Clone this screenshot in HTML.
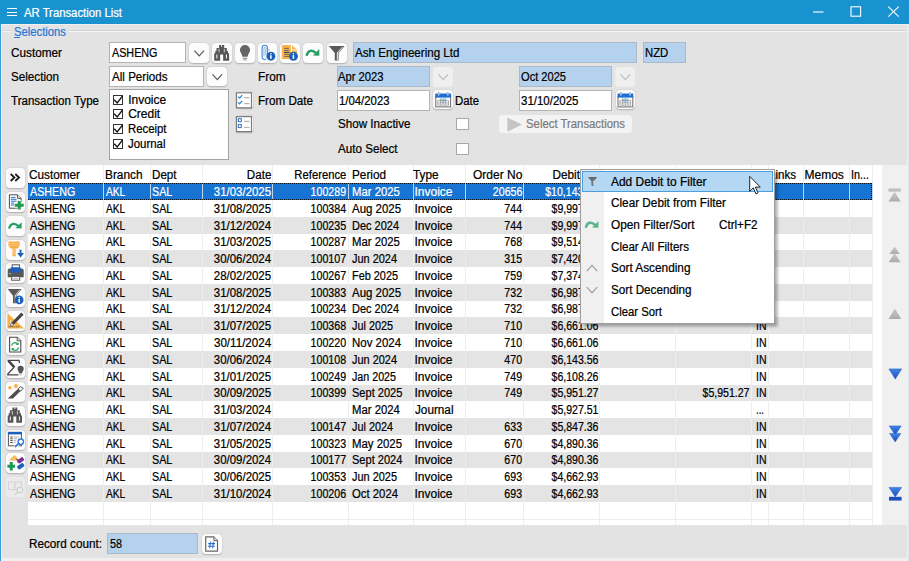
<!DOCTYPE html>
<html><head><meta charset="utf-8"><title>AR Transaction List</title>
<style>
html,body{margin:0;padding:0}
body{width:909px;height:561px;overflow:hidden;position:relative;background:#f0f0f0;font-family:"Liberation Sans",sans-serif;font-size:12px;color:#000}
div,span.t,svg{position:absolute;box-sizing:border-box}
span.t{white-space:pre;display:block;-webkit-text-stroke:0.22px currentColor}
.btn{background:#fcfcfc;border-radius:4px;box-shadow:0 0.6px 1.6px rgba(0,0,0,.24)}
.inp{background:#fff;border:1px solid #b4b4b4}
.ro{background:#b4d2ee;border:1px solid #a9b9c9}
.cb{background:#fff;border:1px solid #a8a8a8}
</style></head><body>
<div style="left:0.00px;top:0.00px;width:909.00px;height:24.00px;background:#1993cf"></div>
<div style="left:0.00px;top:24.00px;width:1.00px;height:537.00px;background:#3a9fd8"></div>
<div style="left:908.00px;top:24.00px;width:1.00px;height:537.00px;background:#dbe6ee"></div>
<div style="left:2.00px;top:25.00px;width:905.00px;height:533.00px;background:#e3e3e3"></div>
<div style="left:6.50px;top:8.20px;width:10.00px;height:1.30px;background:#fff"></div>
<div style="left:6.50px;top:11.50px;width:10.00px;height:1.30px;background:#fff"></div>
<div style="left:6.50px;top:15.00px;width:10.00px;height:1.30px;background:#fff"></div>
<span class="t" style="top:4.70px;line-height:16px;font-size:12px;color:#fff;left:23.50px;transform-origin:0 50%;transform:scaleX(0.9419);">AR Transaction List</span>
<svg style="left:808px;top:2px" width="100" height="20" viewBox="808 2 100 20"><g fill="none" stroke="#fff" stroke-width="1.1"><path d="M813 12h10.5"/><rect x="851" y="6.8" width="9.6" height="9.4"/><path d="M888.3 6.6l10.4 10M898.7 6.6l-10.4 10"/></g></svg>
<div style="left:3.00px;top:30.00px;width:904.00px;height:1.00px;background:#d2d2d2"></div>
<div style="left:3.00px;top:31.00px;width:904.00px;height:1.00px;background:#f6f6f6"></div>
<div style="left:10.60px;top:26.00px;width:58.20px;height:12.00px;background:#e3e3e3"></div>
<span class="t" style="top:24.30px;line-height:16px;font-size:12px;color:#2677d6;left:13.50px;transform-origin:0 50%;transform:scaleX(0.9392);">Selections</span>
<div style="left:14.20px;top:37.20px;width:5.60px;height:1.00px;background:#2677d6"></div>
<span class="t" style="top:44.70px;line-height:16px;font-size:12px;left:11.00px;transform-origin:0 50%;transform:scaleX(0.9805);">Customer</span>
<span class="t" style="top:68.70px;line-height:16px;font-size:12px;left:11.00px;transform-origin:0 50%;transform:scaleX(0.9724);">Selection</span>
<span class="t" style="top:92.50px;line-height:16px;font-size:12px;left:11.00px;transform-origin:0 50%;transform:scaleX(0.9630);">Transaction Type</span>
<span class="t" style="top:69.00px;line-height:16px;font-size:12px;left:258.00px;transform-origin:0 50%;transform:scaleX(0.9823);">From</span>
<span class="t" style="top:92.50px;line-height:16px;font-size:12px;left:258.00px;transform-origin:0 50%;transform:scaleX(0.9704);">From Date</span>
<span class="t" style="top:92.50px;line-height:16px;font-size:12px;left:454.80px;transform-origin:0 50%;transform:scaleX(0.9469);">Date</span>
<span class="t" style="top:116.00px;line-height:16px;font-size:12px;left:338.00px;transform-origin:0 50%;transform:scaleX(0.9705);">Show Inactive</span>
<span class="t" style="top:140.70px;line-height:16px;font-size:12px;left:338.00px;transform-origin:0 50%;transform:scaleX(0.9695);">Auto Select</span>
<div class="inp" style="left:109.00px;top:42.00px;width:77.30px;height:21.30px;"></div>
<span class="t" style="top:44.70px;line-height:16px;font-size:12px;left:112.00px;transform-origin:0 50%;transform:scaleX(0.8978);">ASHENG</span>
<div class="btn" style="left:189.20px;top:42.50px;width:20.00px;height:20.60px;"></div>
<div class="inp" style="left:109.00px;top:65.80px;width:94.90px;height:21.30px;"></div>
<span class="t" style="top:68.70px;line-height:16px;font-size:12px;left:112.00px;transform-origin:0 50%;transform:scaleX(0.9676);">All Periods</span>
<div class="btn" style="left:207.40px;top:66.90px;width:19.60px;height:19.60px;"></div>
<div class="inp" style="left:109.30px;top:89.40px;width:119.60px;height:70.40px;border:1.3px solid #a4a4a4"></div>
<div class="btn" style="left:211.80px;top:42.50px;width:19.80px;height:20.60px;"></div>
<div class="btn" style="left:235.00px;top:42.50px;width:19.80px;height:20.60px;"></div>
<div class="btn" style="left:257.50px;top:42.50px;width:19.80px;height:20.60px;"></div>
<div class="btn" style="left:280.10px;top:42.50px;width:19.80px;height:20.60px;"></div>
<div class="btn" style="left:303.20px;top:42.50px;width:19.80px;height:20.60px;"></div>
<div class="btn" style="left:326.80px;top:42.50px;width:19.80px;height:20.60px;"></div>
<div class="ro" style="left:353.00px;top:42.20px;width:284.00px;height:21.00px;"></div>
<span class="t" style="top:44.70px;line-height:16px;font-size:12px;left:354.50px;transform-origin:0 50%;transform:scaleX(0.9669);">Ash Engineering Ltd</span>
<div class="ro" style="left:643.00px;top:42.20px;width:43.00px;height:21.00px;"></div>
<span class="t" style="top:44.70px;line-height:16px;font-size:12px;left:644.80px;transform-origin:0 50%;transform:scaleX(0.9448);">NZD</span>
<div class="ro" style="left:337.00px;top:66.00px;width:93.00px;height:21.00px;"></div>
<span class="t" style="top:68.70px;line-height:16px;font-size:12px;left:338.20px;transform-origin:0 50%;transform:scaleX(0.9342);">Apr 2023</span>
<div class="btn" style="left:433.20px;top:67.00px;width:19.80px;height:19.50px;background:#efefef;box-shadow:none"></div>
<div class="ro" style="left:518.50px;top:66.00px;width:93.50px;height:21.00px;"></div>
<span class="t" style="top:68.70px;line-height:16px;font-size:12px;left:521.00px;transform-origin:0 50%;transform:scaleX(0.9241);">Oct 2025</span>
<div class="btn" style="left:615.40px;top:67.00px;width:19.80px;height:19.50px;background:#efefef;box-shadow:none"></div>
<div class="inp" style="left:337.00px;top:89.70px;width:93.00px;height:21.00px;"></div>
<span class="t" style="top:92.50px;line-height:16px;font-size:12px;left:338.90px;transform-origin:0 50%;transform:scaleX(0.9460);">1/04/2023</span>
<div class="btn" style="left:433.40px;top:89.90px;width:19.50px;height:19.40px;"></div>
<div class="inp" style="left:518.50px;top:89.70px;width:93.50px;height:21.00px;"></div>
<span class="t" style="top:92.50px;line-height:16px;font-size:12px;left:520.50px;transform-origin:0 50%;transform:scaleX(0.9574);">31/10/2025</span>
<div class="btn" style="left:615.60px;top:89.90px;width:19.50px;height:19.40px;"></div>
<div class="btn" style="left:236.30px;top:92.00px;width:16.30px;height:16.30px;border-radius:2px"></div>
<div class="btn" style="left:236.30px;top:115.70px;width:16.30px;height:16.80px;border-radius:2px"></div>
<div class="cb" style="left:456.30px;top:117.50px;width:12.50px;height:12.50px;"></div>
<div class="cb" style="left:456.30px;top:142.50px;width:12.50px;height:12.50px;"></div>
<div style="left:499.20px;top:115.00px;width:132.60px;height:18.00px;background:#f3f3f3;border-radius:3.5px"></div>
<svg style="left:507px;top:116.5px" width="16" height="16" viewBox="0 0 16 16"><path d="M0.4 0.6L15 7.6L0.4 14.7z" fill="#c4c4c4"/></svg>
<span class="t" style="top:116.00px;line-height:16px;font-size:12px;color:#7b7b7b;left:525.70px;transform-origin:0 50%;transform:scaleX(0.9454);">Select Transactions</span>
<div style="left:113.30px;top:94.50px;width:10.00px;height:10.00px;background:#fff;border:1px solid #333"></div>
<svg style="left:113.3px;top:94.50px" width="10" height="10" viewBox="0 0 10 10" overflow="visible"><path d="M1.2 4.8L4.2 8L9.6 0.8" fill="none" stroke="#111" stroke-width="1.35"/></svg>
<span class="t" style="top:91.50px;line-height:16px;font-size:12px;left:128.20px;transform-origin:0 50%;">Invoice</span>
<div style="left:113.30px;top:109.25px;width:10.00px;height:10.00px;background:#fff;border:1px solid #333"></div>
<svg style="left:113.3px;top:109.25px" width="10" height="10" viewBox="0 0 10 10" overflow="visible"><path d="M1.2 4.8L4.2 8L9.6 0.8" fill="none" stroke="#111" stroke-width="1.35"/></svg>
<span class="t" style="top:106.25px;line-height:16px;font-size:12px;left:128.20px;transform-origin:0 50%;">Credit</span>
<div style="left:113.30px;top:124.00px;width:10.00px;height:10.00px;background:#fff;border:1px solid #333"></div>
<svg style="left:113.3px;top:124.00px" width="10" height="10" viewBox="0 0 10 10" overflow="visible"><path d="M1.2 4.8L4.2 8L9.6 0.8" fill="none" stroke="#111" stroke-width="1.35"/></svg>
<span class="t" style="top:121.00px;line-height:16px;font-size:12px;left:128.20px;transform-origin:0 50%;transform:scaleX(0.9463);">Receipt</span>
<div style="left:113.30px;top:138.75px;width:10.00px;height:10.00px;background:#fff;border:1px solid #333"></div>
<svg style="left:113.3px;top:138.75px" width="10" height="10" viewBox="0 0 10 10" overflow="visible"><path d="M1.2 4.8L4.2 8L9.6 0.8" fill="none" stroke="#111" stroke-width="1.35"/></svg>
<span class="t" style="top:135.75px;line-height:16px;font-size:12px;left:128.20px;transform-origin:0 50%;transform:scaleX(0.9528);">Journal</span>
<div style="left:28.00px;top:165.40px;width:854.00px;height:359.80px;background:#fff"></div>
<div style="left:882.00px;top:165.40px;width:25.00px;height:359.80px;background:#f0f0f0"></div>
<div style="left:28.00px;top:183.00px;width:844.00px;height:17.00px;background:#1874d2"></div>
<div style="left:28.00px;top:217.00px;width:844.00px;height:17.00px;background:#e4e4e4"></div>
<div style="left:28.00px;top:250.00px;width:844.00px;height:17.00px;background:#e4e4e4"></div>
<div style="left:28.00px;top:284.00px;width:844.00px;height:17.00px;background:#e4e4e4"></div>
<div style="left:28.00px;top:317.00px;width:844.00px;height:17.00px;background:#e4e4e4"></div>
<div style="left:28.00px;top:351.00px;width:844.00px;height:17.00px;background:#e4e4e4"></div>
<div style="left:28.00px;top:385.00px;width:844.00px;height:16.00px;background:#e4e4e4"></div>
<div style="left:28.00px;top:418.00px;width:844.00px;height:17.00px;background:#e4e4e4"></div>
<div style="left:28.00px;top:452.00px;width:844.00px;height:16.00px;background:#e4e4e4"></div>
<div style="left:28.00px;top:485.00px;width:844.00px;height:17.00px;background:#e4e4e4"></div>
<div style="left:28.00px;top:519.00px;width:844.00px;height:1.00px;background:#ececec"></div>
<div style="left:103.00px;top:165.40px;width:1.00px;height:359.80px;background:#eeeeee"></div>
<div style="left:103.00px;top:183.00px;width:1.00px;height:17.00px;background:#bcd6f2"></div>
<div style="left:149.50px;top:165.40px;width:1.00px;height:359.80px;background:#eeeeee"></div>
<div style="left:149.50px;top:183.00px;width:1.00px;height:17.00px;background:#bcd6f2"></div>
<div style="left:202.00px;top:165.40px;width:1.00px;height:359.80px;background:#eeeeee"></div>
<div style="left:202.00px;top:183.00px;width:1.00px;height:17.00px;background:#bcd6f2"></div>
<div style="left:272.00px;top:165.40px;width:1.00px;height:359.80px;background:#eeeeee"></div>
<div style="left:272.00px;top:183.00px;width:1.00px;height:17.00px;background:#bcd6f2"></div>
<div style="left:348.20px;top:165.40px;width:1.00px;height:359.80px;background:#eeeeee"></div>
<div style="left:348.20px;top:183.00px;width:1.00px;height:17.00px;background:#bcd6f2"></div>
<div style="left:412.50px;top:165.40px;width:1.00px;height:359.80px;background:#eeeeee"></div>
<div style="left:412.50px;top:183.00px;width:1.00px;height:17.00px;background:#bcd6f2"></div>
<div style="left:465.00px;top:165.40px;width:1.00px;height:359.80px;background:#eeeeee"></div>
<div style="left:465.00px;top:183.00px;width:1.00px;height:17.00px;background:#bcd6f2"></div>
<div style="left:523.20px;top:165.40px;width:1.00px;height:359.80px;background:#eeeeee"></div>
<div style="left:523.20px;top:183.00px;width:1.00px;height:17.00px;background:#bcd6f2"></div>
<div style="left:599.00px;top:165.40px;width:1.00px;height:359.80px;background:#eeeeee"></div>
<div style="left:599.00px;top:183.00px;width:1.00px;height:17.00px;background:#bcd6f2"></div>
<div style="left:674.50px;top:165.40px;width:1.00px;height:359.80px;background:#eeeeee"></div>
<div style="left:674.50px;top:183.00px;width:1.00px;height:17.00px;background:#bcd6f2"></div>
<div style="left:751.00px;top:165.40px;width:1.00px;height:359.80px;background:#eeeeee"></div>
<div style="left:751.00px;top:183.00px;width:1.00px;height:17.00px;background:#bcd6f2"></div>
<div style="left:767.90px;top:165.40px;width:1.00px;height:359.80px;background:#eeeeee"></div>
<div style="left:767.90px;top:183.00px;width:1.00px;height:17.00px;background:#bcd6f2"></div>
<div style="left:802.50px;top:165.40px;width:1.00px;height:359.80px;background:#eeeeee"></div>
<div style="left:802.50px;top:183.00px;width:1.00px;height:17.00px;background:#bcd6f2"></div>
<div style="left:849.00px;top:165.40px;width:1.00px;height:359.80px;background:#eeeeee"></div>
<div style="left:849.00px;top:183.00px;width:1.00px;height:17.00px;background:#bcd6f2"></div>
<div style="left:871.50px;top:165.40px;width:1.00px;height:359.80px;background:#eeeeee"></div>
<div style="left:871.50px;top:183.00px;width:1.00px;height:17.00px;background:#bcd6f2"></div>
<div style="left:28.00px;top:183.00px;width:844.00px;height:1.00px;background:repeating-linear-gradient(90deg,#000 0 1px,transparent 1px 2px);opacity:.85"></div>
<div style="left:28.00px;top:199.00px;width:844.00px;height:1.00px;background:repeating-linear-gradient(90deg,#000 0 1px,transparent 1px 2px);opacity:.85"></div>
<div style="left:871.00px;top:183.00px;width:1.00px;height:17.00px;background:repeating-linear-gradient(0deg,#000 0 1px,transparent 1px 2px);opacity:.85"></div>
<span class="t" style="top:166.50px;line-height:16px;font-size:12px;left:29.00px;transform-origin:0 50%;transform:scaleX(0.9805);">Customer</span>
<span class="t" style="top:166.50px;line-height:16px;font-size:12px;left:104.50px;transform-origin:0 50%;transform:scaleX(0.9863);">Branch</span>
<span class="t" style="top:166.50px;line-height:16px;font-size:12px;left:151.50px;transform-origin:0 50%;transform:scaleX(0.9666);">Dept</span>
<span class="t" style="top:166.50px;line-height:16px;font-size:12px;right:637.20px;transform-origin:100% 50%;transform:scaleX(0.9666);">Date</span>
<span class="t" style="top:166.50px;line-height:16px;font-size:12px;right:562.80px;transform-origin:100% 50%;transform:scaleX(0.9392);">Reference</span>
<span class="t" style="top:166.50px;line-height:16px;font-size:12px;left:351.50px;transform-origin:0 50%;transform:scaleX(0.9802);">Period</span>
<span class="t" style="top:166.50px;line-height:16px;font-size:12px;left:413.30px;transform-origin:0 50%;transform:scaleX(0.9802);">Type</span>
<span class="t" style="top:166.50px;line-height:16px;font-size:12px;right:386.70px;transform-origin:100% 50%;">Order No</span>
<span class="t" style="top:166.50px;line-height:16px;font-size:12px;right:328.90px;transform-origin:100% 50%;transform:scaleX(0.9817);">Debit</span>
<span class="t" style="top:166.50px;line-height:16px;font-size:12px;right:235.80px;transform-origin:100% 50%;">Credit</span>
<span class="t" style="top:166.50px;line-height:16px;font-size:12px;right:159.50px;transform-origin:100% 50%;transform:scaleX(0.9890);">Outstanding</span>
<span class="t" style="top:166.50px;line-height:16px;font-size:12px;left:769.10px;transform-origin:0 50%;transform:scaleX(0.9639);">Links</span>
<span class="t" style="top:166.50px;line-height:16px;font-size:12px;left:804.50px;transform-origin:0 50%;">Memos</span>
<span class="t" style="top:166.50px;line-height:16px;font-size:12px;left:851.00px;transform-origin:0 50%;transform:scaleX(0.8995);">In...</span>
<span class="t" style="top:183.90px;line-height:16px;font-size:12px;color:#fff;left:29.70px;transform-origin:0 50%;transform:scaleX(0.8938);">ASHENG</span>
<span class="t" style="top:183.90px;line-height:16px;font-size:12px;color:#fff;left:105.50px;transform-origin:0 50%;transform:scaleX(0.8465);">AKL</span>
<span class="t" style="top:183.90px;line-height:16px;font-size:12px;color:#fff;left:151.50px;transform-origin:0 50%;transform:scaleX(0.8950);">SAL</span>
<span class="t" style="top:183.90px;line-height:16px;font-size:12px;color:#fff;right:637.50px;transform-origin:100% 50%;transform:scaleX(0.9524);">31/03/2025</span>
<span class="t" style="top:183.90px;line-height:16px;font-size:12px;color:#fff;right:563.30px;transform-origin:100% 50%;transform:scaleX(0.8866);">100289</span>
<span class="t" style="top:183.90px;line-height:16px;font-size:12px;color:#fff;left:352.10px;transform-origin:0 50%;transform:scaleX(0.9429);">Mar 2025</span>
<span class="t" style="top:183.90px;line-height:16px;font-size:12px;color:#fff;left:414.50px;transform-origin:0 50%;">Invoice</span>
<span class="t" style="top:183.90px;line-height:16px;font-size:12px;color:#fff;right:386.70px;transform-origin:100% 50%;transform:scaleX(0.8856);">20656</span>
<span class="t" style="top:183.90px;line-height:16px;font-size:12px;color:#fff;right:311.00px;transform-origin:100% 50%;transform:scaleX(0.8792);">$10,143.56</span>
<span class="t" style="top:183.90px;line-height:16px;font-size:12px;color:#fff;left:755.50px;transform-origin:0 50%;transform:scaleX(0.8750);">IN</span>
<span class="t" style="top:200.90px;line-height:16px;font-size:12px;left:29.70px;transform-origin:0 50%;transform:scaleX(0.8938);">ASHENG</span>
<span class="t" style="top:200.90px;line-height:16px;font-size:12px;left:105.50px;transform-origin:0 50%;transform:scaleX(0.8465);">AKL</span>
<span class="t" style="top:200.90px;line-height:16px;font-size:12px;left:151.50px;transform-origin:0 50%;transform:scaleX(0.8950);">SAL</span>
<span class="t" style="top:200.90px;line-height:16px;font-size:12px;right:637.50px;transform-origin:100% 50%;transform:scaleX(0.9524);">31/08/2025</span>
<span class="t" style="top:200.90px;line-height:16px;font-size:12px;right:563.30px;transform-origin:100% 50%;transform:scaleX(0.8866);">100384</span>
<span class="t" style="top:200.90px;line-height:16px;font-size:12px;left:352.10px;transform-origin:0 50%;transform:scaleX(0.9537);">Aug 2025</span>
<span class="t" style="top:200.90px;line-height:16px;font-size:12px;left:414.50px;transform-origin:0 50%;">Invoice</span>
<span class="t" style="top:200.90px;line-height:16px;font-size:12px;right:386.70px;transform-origin:100% 50%;transform:scaleX(0.8816);">744</span>
<span class="t" style="top:200.90px;line-height:16px;font-size:12px;right:311.00px;transform-origin:100% 50%;transform:scaleX(0.8776);">$9,997.38</span>
<span class="t" style="top:200.90px;line-height:16px;font-size:12px;left:755.50px;transform-origin:0 50%;transform:scaleX(0.8750);">IN</span>
<span class="t" style="top:217.90px;line-height:16px;font-size:12px;left:29.70px;transform-origin:0 50%;transform:scaleX(0.8938);">ASHENG</span>
<span class="t" style="top:217.90px;line-height:16px;font-size:12px;left:105.50px;transform-origin:0 50%;transform:scaleX(0.8465);">AKL</span>
<span class="t" style="top:217.90px;line-height:16px;font-size:12px;left:151.50px;transform-origin:0 50%;transform:scaleX(0.8950);">SAL</span>
<span class="t" style="top:217.90px;line-height:16px;font-size:12px;right:637.50px;transform-origin:100% 50%;transform:scaleX(0.9524);">31/12/2024</span>
<span class="t" style="top:217.90px;line-height:16px;font-size:12px;right:563.30px;transform-origin:100% 50%;transform:scaleX(0.8866);">100235</span>
<span class="t" style="top:217.90px;line-height:16px;font-size:12px;left:352.10px;transform-origin:0 50%;transform:scaleX(0.9150);">Dec 2024</span>
<span class="t" style="top:217.90px;line-height:16px;font-size:12px;left:414.50px;transform-origin:0 50%;">Invoice</span>
<span class="t" style="top:217.90px;line-height:16px;font-size:12px;right:386.70px;transform-origin:100% 50%;transform:scaleX(0.8816);">744</span>
<span class="t" style="top:217.90px;line-height:16px;font-size:12px;right:311.00px;transform-origin:100% 50%;transform:scaleX(0.8776);">$9,997.38</span>
<span class="t" style="top:217.90px;line-height:16px;font-size:12px;left:755.50px;transform-origin:0 50%;transform:scaleX(0.8750);">IN</span>
<span class="t" style="top:234.40px;line-height:16px;font-size:12px;left:29.70px;transform-origin:0 50%;transform:scaleX(0.8938);">ASHENG</span>
<span class="t" style="top:234.40px;line-height:16px;font-size:12px;left:105.50px;transform-origin:0 50%;transform:scaleX(0.8465);">AKL</span>
<span class="t" style="top:234.40px;line-height:16px;font-size:12px;left:151.50px;transform-origin:0 50%;transform:scaleX(0.8950);">SAL</span>
<span class="t" style="top:234.40px;line-height:16px;font-size:12px;right:637.50px;transform-origin:100% 50%;transform:scaleX(0.9524);">31/03/2025</span>
<span class="t" style="top:234.40px;line-height:16px;font-size:12px;right:563.30px;transform-origin:100% 50%;transform:scaleX(0.8866);">100287</span>
<span class="t" style="top:234.40px;line-height:16px;font-size:12px;left:352.10px;transform-origin:0 50%;transform:scaleX(0.9429);">Mar 2025</span>
<span class="t" style="top:234.40px;line-height:16px;font-size:12px;left:414.50px;transform-origin:0 50%;">Invoice</span>
<span class="t" style="top:234.40px;line-height:16px;font-size:12px;right:386.70px;transform-origin:100% 50%;transform:scaleX(0.8816);">768</span>
<span class="t" style="top:234.40px;line-height:16px;font-size:12px;right:311.00px;transform-origin:100% 50%;transform:scaleX(0.8776);">$9,514.06</span>
<span class="t" style="top:234.40px;line-height:16px;font-size:12px;left:755.50px;transform-origin:0 50%;transform:scaleX(0.8750);">IN</span>
<span class="t" style="top:250.90px;line-height:16px;font-size:12px;left:29.70px;transform-origin:0 50%;transform:scaleX(0.8938);">ASHENG</span>
<span class="t" style="top:250.90px;line-height:16px;font-size:12px;left:105.50px;transform-origin:0 50%;transform:scaleX(0.8465);">AKL</span>
<span class="t" style="top:250.90px;line-height:16px;font-size:12px;left:151.50px;transform-origin:0 50%;transform:scaleX(0.8950);">SAL</span>
<span class="t" style="top:250.90px;line-height:16px;font-size:12px;right:637.50px;transform-origin:100% 50%;transform:scaleX(0.9524);">30/06/2024</span>
<span class="t" style="top:250.90px;line-height:16px;font-size:12px;right:563.30px;transform-origin:100% 50%;transform:scaleX(0.8866);">100107</span>
<span class="t" style="top:250.90px;line-height:16px;font-size:12px;left:352.10px;transform-origin:0 50%;transform:scaleX(0.9114);">Jun 2024</span>
<span class="t" style="top:250.90px;line-height:16px;font-size:12px;left:414.50px;transform-origin:0 50%;">Invoice</span>
<span class="t" style="top:250.90px;line-height:16px;font-size:12px;right:386.70px;transform-origin:100% 50%;transform:scaleX(0.8816);">315</span>
<span class="t" style="top:250.90px;line-height:16px;font-size:12px;right:311.00px;transform-origin:100% 50%;transform:scaleX(0.8776);">$7,420.36</span>
<span class="t" style="top:250.90px;line-height:16px;font-size:12px;left:755.50px;transform-origin:0 50%;transform:scaleX(0.8750);">IN</span>
<span class="t" style="top:267.90px;line-height:16px;font-size:12px;left:29.70px;transform-origin:0 50%;transform:scaleX(0.8938);">ASHENG</span>
<span class="t" style="top:267.90px;line-height:16px;font-size:12px;left:105.50px;transform-origin:0 50%;transform:scaleX(0.8465);">AKL</span>
<span class="t" style="top:267.90px;line-height:16px;font-size:12px;left:151.50px;transform-origin:0 50%;transform:scaleX(0.8950);">SAL</span>
<span class="t" style="top:267.90px;line-height:16px;font-size:12px;right:637.50px;transform-origin:100% 50%;transform:scaleX(0.9524);">28/02/2025</span>
<span class="t" style="top:267.90px;line-height:16px;font-size:12px;right:563.30px;transform-origin:100% 50%;transform:scaleX(0.8866);">100267</span>
<span class="t" style="top:267.90px;line-height:16px;font-size:12px;left:352.10px;transform-origin:0 50%;transform:scaleX(0.9072);">Feb 2025</span>
<span class="t" style="top:267.90px;line-height:16px;font-size:12px;left:414.50px;transform-origin:0 50%;">Invoice</span>
<span class="t" style="top:267.90px;line-height:16px;font-size:12px;right:386.70px;transform-origin:100% 50%;transform:scaleX(0.8816);">759</span>
<span class="t" style="top:267.90px;line-height:16px;font-size:12px;right:311.00px;transform-origin:100% 50%;transform:scaleX(0.8776);">$7,374.06</span>
<span class="t" style="top:267.90px;line-height:16px;font-size:12px;left:755.50px;transform-origin:0 50%;transform:scaleX(0.8750);">IN</span>
<span class="t" style="top:284.90px;line-height:16px;font-size:12px;left:29.70px;transform-origin:0 50%;transform:scaleX(0.8938);">ASHENG</span>
<span class="t" style="top:284.90px;line-height:16px;font-size:12px;left:105.50px;transform-origin:0 50%;transform:scaleX(0.8465);">AKL</span>
<span class="t" style="top:284.90px;line-height:16px;font-size:12px;left:151.50px;transform-origin:0 50%;transform:scaleX(0.8950);">SAL</span>
<span class="t" style="top:284.90px;line-height:16px;font-size:12px;right:637.50px;transform-origin:100% 50%;transform:scaleX(0.9524);">31/08/2025</span>
<span class="t" style="top:284.90px;line-height:16px;font-size:12px;right:563.30px;transform-origin:100% 50%;transform:scaleX(0.8866);">100383</span>
<span class="t" style="top:284.90px;line-height:16px;font-size:12px;left:352.10px;transform-origin:0 50%;transform:scaleX(0.9537);">Aug 2025</span>
<span class="t" style="top:284.90px;line-height:16px;font-size:12px;left:414.50px;transform-origin:0 50%;">Invoice</span>
<span class="t" style="top:284.90px;line-height:16px;font-size:12px;right:386.70px;transform-origin:100% 50%;transform:scaleX(0.8816);">732</span>
<span class="t" style="top:284.90px;line-height:16px;font-size:12px;right:311.00px;transform-origin:100% 50%;transform:scaleX(0.8776);">$6,987.26</span>
<span class="t" style="top:284.90px;line-height:16px;font-size:12px;left:755.50px;transform-origin:0 50%;transform:scaleX(0.8750);">IN</span>
<span class="t" style="top:301.40px;line-height:16px;font-size:12px;left:29.70px;transform-origin:0 50%;transform:scaleX(0.8938);">ASHENG</span>
<span class="t" style="top:301.40px;line-height:16px;font-size:12px;left:105.50px;transform-origin:0 50%;transform:scaleX(0.8465);">AKL</span>
<span class="t" style="top:301.40px;line-height:16px;font-size:12px;left:151.50px;transform-origin:0 50%;transform:scaleX(0.8950);">SAL</span>
<span class="t" style="top:301.40px;line-height:16px;font-size:12px;right:637.50px;transform-origin:100% 50%;transform:scaleX(0.9524);">31/12/2024</span>
<span class="t" style="top:301.40px;line-height:16px;font-size:12px;right:563.30px;transform-origin:100% 50%;transform:scaleX(0.8866);">100234</span>
<span class="t" style="top:301.40px;line-height:16px;font-size:12px;left:352.10px;transform-origin:0 50%;transform:scaleX(0.9150);">Dec 2024</span>
<span class="t" style="top:301.40px;line-height:16px;font-size:12px;left:414.50px;transform-origin:0 50%;">Invoice</span>
<span class="t" style="top:301.40px;line-height:16px;font-size:12px;right:386.70px;transform-origin:100% 50%;transform:scaleX(0.8816);">732</span>
<span class="t" style="top:301.40px;line-height:16px;font-size:12px;right:311.00px;transform-origin:100% 50%;transform:scaleX(0.8776);">$6,987.26</span>
<span class="t" style="top:301.40px;line-height:16px;font-size:12px;left:755.50px;transform-origin:0 50%;transform:scaleX(0.8750);">IN</span>
<span class="t" style="top:317.90px;line-height:16px;font-size:12px;left:29.70px;transform-origin:0 50%;transform:scaleX(0.8938);">ASHENG</span>
<span class="t" style="top:317.90px;line-height:16px;font-size:12px;left:105.50px;transform-origin:0 50%;transform:scaleX(0.8465);">AKL</span>
<span class="t" style="top:317.90px;line-height:16px;font-size:12px;left:151.50px;transform-origin:0 50%;transform:scaleX(0.8950);">SAL</span>
<span class="t" style="top:317.90px;line-height:16px;font-size:12px;right:637.50px;transform-origin:100% 50%;transform:scaleX(0.9524);">31/07/2025</span>
<span class="t" style="top:317.90px;line-height:16px;font-size:12px;right:563.30px;transform-origin:100% 50%;transform:scaleX(0.8866);">100368</span>
<span class="t" style="top:317.90px;line-height:16px;font-size:12px;left:352.10px;transform-origin:0 50%;transform:scaleX(0.9037);">Jul 2025</span>
<span class="t" style="top:317.90px;line-height:16px;font-size:12px;left:414.50px;transform-origin:0 50%;">Invoice</span>
<span class="t" style="top:317.90px;line-height:16px;font-size:12px;right:386.70px;transform-origin:100% 50%;transform:scaleX(0.8816);">710</span>
<span class="t" style="top:317.90px;line-height:16px;font-size:12px;right:311.00px;transform-origin:100% 50%;transform:scaleX(0.8776);">$6,661.06</span>
<span class="t" style="top:317.90px;line-height:16px;font-size:12px;left:755.50px;transform-origin:0 50%;transform:scaleX(0.8750);">IN</span>
<span class="t" style="top:334.90px;line-height:16px;font-size:12px;left:29.70px;transform-origin:0 50%;transform:scaleX(0.8938);">ASHENG</span>
<span class="t" style="top:334.90px;line-height:16px;font-size:12px;left:105.50px;transform-origin:0 50%;transform:scaleX(0.8465);">AKL</span>
<span class="t" style="top:334.90px;line-height:16px;font-size:12px;left:151.50px;transform-origin:0 50%;transform:scaleX(0.8950);">SAL</span>
<span class="t" style="top:334.90px;line-height:16px;font-size:12px;right:637.50px;transform-origin:100% 50%;transform:scaleX(0.9668);">30/11/2024</span>
<span class="t" style="top:334.90px;line-height:16px;font-size:12px;right:563.30px;transform-origin:100% 50%;transform:scaleX(0.8866);">100220</span>
<span class="t" style="top:334.90px;line-height:16px;font-size:12px;left:352.10px;transform-origin:0 50%;transform:scaleX(0.9539);">Nov 2024</span>
<span class="t" style="top:334.90px;line-height:16px;font-size:12px;left:414.50px;transform-origin:0 50%;">Invoice</span>
<span class="t" style="top:334.90px;line-height:16px;font-size:12px;right:386.70px;transform-origin:100% 50%;transform:scaleX(0.8816);">710</span>
<span class="t" style="top:334.90px;line-height:16px;font-size:12px;right:311.00px;transform-origin:100% 50%;transform:scaleX(0.8776);">$6,661.06</span>
<span class="t" style="top:334.90px;line-height:16px;font-size:12px;left:755.50px;transform-origin:0 50%;transform:scaleX(0.8750);">IN</span>
<span class="t" style="top:351.90px;line-height:16px;font-size:12px;left:29.70px;transform-origin:0 50%;transform:scaleX(0.8938);">ASHENG</span>
<span class="t" style="top:351.90px;line-height:16px;font-size:12px;left:105.50px;transform-origin:0 50%;transform:scaleX(0.8465);">AKL</span>
<span class="t" style="top:351.90px;line-height:16px;font-size:12px;left:151.50px;transform-origin:0 50%;transform:scaleX(0.8950);">SAL</span>
<span class="t" style="top:351.90px;line-height:16px;font-size:12px;right:637.50px;transform-origin:100% 50%;transform:scaleX(0.9524);">30/06/2024</span>
<span class="t" style="top:351.90px;line-height:16px;font-size:12px;right:563.30px;transform-origin:100% 50%;transform:scaleX(0.8866);">100108</span>
<span class="t" style="top:351.90px;line-height:16px;font-size:12px;left:352.10px;transform-origin:0 50%;transform:scaleX(0.9114);">Jun 2024</span>
<span class="t" style="top:351.90px;line-height:16px;font-size:12px;left:414.50px;transform-origin:0 50%;">Invoice</span>
<span class="t" style="top:351.90px;line-height:16px;font-size:12px;right:386.70px;transform-origin:100% 50%;transform:scaleX(0.8816);">470</span>
<span class="t" style="top:351.90px;line-height:16px;font-size:12px;right:311.00px;transform-origin:100% 50%;transform:scaleX(0.8776);">$6,143.56</span>
<span class="t" style="top:351.90px;line-height:16px;font-size:12px;left:755.50px;transform-origin:0 50%;transform:scaleX(0.8750);">IN</span>
<span class="t" style="top:368.90px;line-height:16px;font-size:12px;left:29.70px;transform-origin:0 50%;transform:scaleX(0.8938);">ASHENG</span>
<span class="t" style="top:368.90px;line-height:16px;font-size:12px;left:105.50px;transform-origin:0 50%;transform:scaleX(0.8465);">AKL</span>
<span class="t" style="top:368.90px;line-height:16px;font-size:12px;left:151.50px;transform-origin:0 50%;transform:scaleX(0.8950);">SAL</span>
<span class="t" style="top:368.90px;line-height:16px;font-size:12px;right:637.50px;transform-origin:100% 50%;transform:scaleX(0.9524);">31/01/2025</span>
<span class="t" style="top:368.90px;line-height:16px;font-size:12px;right:563.30px;transform-origin:100% 50%;transform:scaleX(0.8866);">100249</span>
<span class="t" style="top:368.90px;line-height:16px;font-size:12px;left:352.10px;transform-origin:0 50%;transform:scaleX(0.8911);">Jan 2025</span>
<span class="t" style="top:368.90px;line-height:16px;font-size:12px;left:414.50px;transform-origin:0 50%;">Invoice</span>
<span class="t" style="top:368.90px;line-height:16px;font-size:12px;right:386.70px;transform-origin:100% 50%;transform:scaleX(0.8816);">749</span>
<span class="t" style="top:368.90px;line-height:16px;font-size:12px;right:311.00px;transform-origin:100% 50%;transform:scaleX(0.8776);">$6,108.26</span>
<span class="t" style="top:368.90px;line-height:16px;font-size:12px;left:755.50px;transform-origin:0 50%;transform:scaleX(0.8750);">IN</span>
<span class="t" style="top:385.40px;line-height:16px;font-size:12px;left:29.70px;transform-origin:0 50%;transform:scaleX(0.8938);">ASHENG</span>
<span class="t" style="top:385.40px;line-height:16px;font-size:12px;left:105.50px;transform-origin:0 50%;transform:scaleX(0.8465);">AKL</span>
<span class="t" style="top:385.40px;line-height:16px;font-size:12px;left:151.50px;transform-origin:0 50%;transform:scaleX(0.8950);">SAL</span>
<span class="t" style="top:385.40px;line-height:16px;font-size:12px;right:637.50px;transform-origin:100% 50%;transform:scaleX(0.9524);">30/09/2025</span>
<span class="t" style="top:385.40px;line-height:16px;font-size:12px;right:563.30px;transform-origin:100% 50%;transform:scaleX(0.8866);">100399</span>
<span class="t" style="top:385.40px;line-height:16px;font-size:12px;left:352.10px;transform-origin:0 50%;transform:scaleX(0.9212);">Sept 2025</span>
<span class="t" style="top:385.40px;line-height:16px;font-size:12px;left:414.50px;transform-origin:0 50%;">Invoice</span>
<span class="t" style="top:385.40px;line-height:16px;font-size:12px;right:386.70px;transform-origin:100% 50%;transform:scaleX(0.8816);">749</span>
<span class="t" style="top:385.40px;line-height:16px;font-size:12px;right:311.00px;transform-origin:100% 50%;transform:scaleX(0.8776);">$5,951.27</span>
<span class="t" style="top:385.40px;line-height:16px;font-size:12px;right:160.00px;transform-origin:100% 50%;transform:scaleX(0.8776);">$5,951.27</span>
<span class="t" style="top:385.40px;line-height:16px;font-size:12px;left:755.50px;transform-origin:0 50%;transform:scaleX(0.8750);">IN</span>
<span class="t" style="top:401.90px;line-height:16px;font-size:12px;left:29.70px;transform-origin:0 50%;transform:scaleX(0.8938);">ASHENG</span>
<span class="t" style="top:401.90px;line-height:16px;font-size:12px;left:105.50px;transform-origin:0 50%;transform:scaleX(0.8465);">AKL</span>
<span class="t" style="top:401.90px;line-height:16px;font-size:12px;left:151.50px;transform-origin:0 50%;transform:scaleX(0.8950);">SAL</span>
<span class="t" style="top:401.90px;line-height:16px;font-size:12px;right:637.50px;transform-origin:100% 50%;transform:scaleX(0.9524);">31/03/2024</span>
<span class="t" style="top:401.90px;line-height:16px;font-size:12px;left:352.10px;transform-origin:0 50%;transform:scaleX(0.9429);">Mar 2024</span>
<span class="t" style="top:401.90px;line-height:16px;font-size:12px;left:414.50px;transform-origin:0 50%;transform:scaleX(0.9782);">Journal</span>
<span class="t" style="top:401.90px;line-height:16px;font-size:12px;right:311.00px;transform-origin:100% 50%;transform:scaleX(0.8776);">$5,927.51</span>
<span class="t" style="top:401.90px;line-height:16px;font-size:12px;left:755.50px;transform-origin:0 50%;transform:scaleX(0.7998);">...</span>
<span class="t" style="top:418.90px;line-height:16px;font-size:12px;left:29.70px;transform-origin:0 50%;transform:scaleX(0.8938);">ASHENG</span>
<span class="t" style="top:418.90px;line-height:16px;font-size:12px;left:105.50px;transform-origin:0 50%;transform:scaleX(0.8465);">AKL</span>
<span class="t" style="top:418.90px;line-height:16px;font-size:12px;left:151.50px;transform-origin:0 50%;transform:scaleX(0.8950);">SAL</span>
<span class="t" style="top:418.90px;line-height:16px;font-size:12px;right:637.50px;transform-origin:100% 50%;transform:scaleX(0.9524);">31/07/2024</span>
<span class="t" style="top:418.90px;line-height:16px;font-size:12px;right:563.30px;transform-origin:100% 50%;transform:scaleX(0.8866);">100147</span>
<span class="t" style="top:418.90px;line-height:16px;font-size:12px;left:352.10px;transform-origin:0 50%;transform:scaleX(0.9037);">Jul 2024</span>
<span class="t" style="top:418.90px;line-height:16px;font-size:12px;left:414.50px;transform-origin:0 50%;">Invoice</span>
<span class="t" style="top:418.90px;line-height:16px;font-size:12px;right:386.70px;transform-origin:100% 50%;transform:scaleX(0.8816);">633</span>
<span class="t" style="top:418.90px;line-height:16px;font-size:12px;right:311.00px;transform-origin:100% 50%;transform:scaleX(0.8776);">$5,847.36</span>
<span class="t" style="top:418.90px;line-height:16px;font-size:12px;left:755.50px;transform-origin:0 50%;transform:scaleX(0.8750);">IN</span>
<span class="t" style="top:435.90px;line-height:16px;font-size:12px;left:29.70px;transform-origin:0 50%;transform:scaleX(0.8938);">ASHENG</span>
<span class="t" style="top:435.90px;line-height:16px;font-size:12px;left:105.50px;transform-origin:0 50%;transform:scaleX(0.8465);">AKL</span>
<span class="t" style="top:435.90px;line-height:16px;font-size:12px;left:151.50px;transform-origin:0 50%;transform:scaleX(0.8950);">SAL</span>
<span class="t" style="top:435.90px;line-height:16px;font-size:12px;right:637.50px;transform-origin:100% 50%;transform:scaleX(0.9524);">31/05/2025</span>
<span class="t" style="top:435.90px;line-height:16px;font-size:12px;right:563.30px;transform-origin:100% 50%;transform:scaleX(0.8866);">100323</span>
<span class="t" style="top:435.90px;line-height:16px;font-size:12px;left:352.10px;transform-origin:0 50%;transform:scaleX(0.9488);">May 2025</span>
<span class="t" style="top:435.90px;line-height:16px;font-size:12px;left:414.50px;transform-origin:0 50%;">Invoice</span>
<span class="t" style="top:435.90px;line-height:16px;font-size:12px;right:386.70px;transform-origin:100% 50%;transform:scaleX(0.8816);">670</span>
<span class="t" style="top:435.90px;line-height:16px;font-size:12px;right:311.00px;transform-origin:100% 50%;transform:scaleX(0.8776);">$4,890.36</span>
<span class="t" style="top:435.90px;line-height:16px;font-size:12px;left:755.50px;transform-origin:0 50%;transform:scaleX(0.8750);">IN</span>
<span class="t" style="top:452.40px;line-height:16px;font-size:12px;left:29.70px;transform-origin:0 50%;transform:scaleX(0.8938);">ASHENG</span>
<span class="t" style="top:452.40px;line-height:16px;font-size:12px;left:105.50px;transform-origin:0 50%;transform:scaleX(0.8465);">AKL</span>
<span class="t" style="top:452.40px;line-height:16px;font-size:12px;left:151.50px;transform-origin:0 50%;transform:scaleX(0.8950);">SAL</span>
<span class="t" style="top:452.40px;line-height:16px;font-size:12px;right:637.50px;transform-origin:100% 50%;transform:scaleX(0.9524);">30/09/2024</span>
<span class="t" style="top:452.40px;line-height:16px;font-size:12px;right:563.30px;transform-origin:100% 50%;transform:scaleX(0.8866);">100177</span>
<span class="t" style="top:452.40px;line-height:16px;font-size:12px;left:352.10px;transform-origin:0 50%;transform:scaleX(0.9212);">Sept 2024</span>
<span class="t" style="top:452.40px;line-height:16px;font-size:12px;left:414.50px;transform-origin:0 50%;">Invoice</span>
<span class="t" style="top:452.40px;line-height:16px;font-size:12px;right:386.70px;transform-origin:100% 50%;transform:scaleX(0.8816);">670</span>
<span class="t" style="top:452.40px;line-height:16px;font-size:12px;right:311.00px;transform-origin:100% 50%;transform:scaleX(0.8776);">$4,890.36</span>
<span class="t" style="top:452.40px;line-height:16px;font-size:12px;left:755.50px;transform-origin:0 50%;transform:scaleX(0.8750);">IN</span>
<span class="t" style="top:468.90px;line-height:16px;font-size:12px;left:29.70px;transform-origin:0 50%;transform:scaleX(0.8938);">ASHENG</span>
<span class="t" style="top:468.90px;line-height:16px;font-size:12px;left:105.50px;transform-origin:0 50%;transform:scaleX(0.8465);">AKL</span>
<span class="t" style="top:468.90px;line-height:16px;font-size:12px;left:151.50px;transform-origin:0 50%;transform:scaleX(0.8950);">SAL</span>
<span class="t" style="top:468.90px;line-height:16px;font-size:12px;right:637.50px;transform-origin:100% 50%;transform:scaleX(0.9524);">30/06/2025</span>
<span class="t" style="top:468.90px;line-height:16px;font-size:12px;right:563.30px;transform-origin:100% 50%;transform:scaleX(0.8866);">100353</span>
<span class="t" style="top:468.90px;line-height:16px;font-size:12px;left:352.10px;transform-origin:0 50%;transform:scaleX(0.9114);">Jun 2025</span>
<span class="t" style="top:468.90px;line-height:16px;font-size:12px;left:414.50px;transform-origin:0 50%;">Invoice</span>
<span class="t" style="top:468.90px;line-height:16px;font-size:12px;right:386.70px;transform-origin:100% 50%;transform:scaleX(0.8816);">693</span>
<span class="t" style="top:468.90px;line-height:16px;font-size:12px;right:311.00px;transform-origin:100% 50%;transform:scaleX(0.8776);">$4,662.93</span>
<span class="t" style="top:468.90px;line-height:16px;font-size:12px;left:755.50px;transform-origin:0 50%;transform:scaleX(0.8750);">IN</span>
<span class="t" style="top:485.90px;line-height:16px;font-size:12px;left:29.70px;transform-origin:0 50%;transform:scaleX(0.8938);">ASHENG</span>
<span class="t" style="top:485.90px;line-height:16px;font-size:12px;left:105.50px;transform-origin:0 50%;transform:scaleX(0.8465);">AKL</span>
<span class="t" style="top:485.90px;line-height:16px;font-size:12px;left:151.50px;transform-origin:0 50%;transform:scaleX(0.8950);">SAL</span>
<span class="t" style="top:485.90px;line-height:16px;font-size:12px;right:637.50px;transform-origin:100% 50%;transform:scaleX(0.9524);">31/10/2024</span>
<span class="t" style="top:485.90px;line-height:16px;font-size:12px;right:563.30px;transform-origin:100% 50%;transform:scaleX(0.8866);">100206</span>
<span class="t" style="top:485.90px;line-height:16px;font-size:12px;left:352.10px;transform-origin:0 50%;transform:scaleX(0.9446);">Oct 2024</span>
<span class="t" style="top:485.90px;line-height:16px;font-size:12px;left:414.50px;transform-origin:0 50%;">Invoice</span>
<span class="t" style="top:485.90px;line-height:16px;font-size:12px;right:386.70px;transform-origin:100% 50%;transform:scaleX(0.8816);">693</span>
<span class="t" style="top:485.90px;line-height:16px;font-size:12px;right:311.00px;transform-origin:100% 50%;transform:scaleX(0.8776);">$4,662.93</span>
<span class="t" style="top:485.90px;line-height:16px;font-size:12px;left:755.50px;transform-origin:0 50%;transform:scaleX(0.8750);">IN</span>
<div class="btn" style="left:5.60px;top:168.40px;width:19.80px;height:20.00px;"></div>
<div class="btn" style="left:5.60px;top:192.15px;width:19.80px;height:20.00px;"></div>
<div class="btn" style="left:5.60px;top:215.90px;width:19.80px;height:20.00px;"></div>
<div class="btn" style="left:5.60px;top:239.65px;width:19.80px;height:20.00px;"></div>
<div class="btn" style="left:5.60px;top:263.40px;width:19.80px;height:20.00px;"></div>
<div class="btn" style="left:5.60px;top:287.15px;width:19.80px;height:20.00px;"></div>
<div class="btn" style="left:5.60px;top:310.90px;width:19.80px;height:20.00px;"></div>
<div class="btn" style="left:5.60px;top:334.65px;width:19.80px;height:20.00px;"></div>
<div class="btn" style="left:5.60px;top:358.40px;width:19.80px;height:20.00px;"></div>
<div class="btn" style="left:5.60px;top:382.15px;width:19.80px;height:20.00px;"></div>
<div class="btn" style="left:5.60px;top:405.90px;width:19.80px;height:20.00px;"></div>
<div class="btn" style="left:5.60px;top:429.65px;width:19.80px;height:20.00px;"></div>
<div class="btn" style="left:5.60px;top:453.40px;width:19.80px;height:20.00px;"></div>
<div class="btn" style="left:5.60px;top:477.15px;width:19.80px;height:20.00px;background:#ebebeb;box-shadow:none"></div>
<span class="t" style="top:536.00px;line-height:16px;font-size:12px;left:28.50px;transform-origin:0 50%;transform:scaleX(0.9772);">Record count:</span>
<div class="ro" style="left:107.20px;top:533.00px;width:91.00px;height:21.20px;"></div>
<span class="t" style="top:536.00px;line-height:16px;font-size:12px;left:110.00px;transform-origin:0 50%;transform:scaleX(0.8991);">58</span>
<div class="btn" style="left:202.00px;top:533.80px;width:20.30px;height:20.40px;"></div>
<div style="left:579.60px;top:168.70px;width:195.60px;height:155.60px;background:#fff;border:1.2px solid #9e9e9e;box-shadow:2.5px 2.5px 3px rgba(0,0,0,.33)"></div>
<div style="left:580.80px;top:169.90px;width:22.90px;height:153.20px;background:#f0f0f0"></div>
<div style="left:582.00px;top:171.20px;width:191.00px;height:20.60px;background:#b4d7f3;border:1px solid #4a9fe0"></div>
<span class="t" style="top:173.50px;line-height:16px;font-size:12px;left:610.90px;transform-origin:0 50%;transform:scaleX(0.9944);">Add Debit to Filter</span>
<span class="t" style="top:195.10px;line-height:16px;font-size:12px;left:610.90px;transform-origin:0 50%;transform:scaleX(0.9799);">Clear Debit from Filter</span>
<span class="t" style="top:216.70px;line-height:16px;font-size:12px;left:610.90px;transform-origin:0 50%;transform:scaleX(0.9859);">Open Filter/Sort</span>
<span class="t" style="top:238.90px;line-height:16px;font-size:12px;left:610.90px;transform-origin:0 50%;transform:scaleX(0.9667);">Clear All Filters</span>
<span class="t" style="top:260.40px;line-height:16px;font-size:12px;left:610.90px;transform-origin:0 50%;transform:scaleX(0.9849);">Sort Ascending</span>
<span class="t" style="top:282.00px;line-height:16px;font-size:12px;left:610.90px;transform-origin:0 50%;transform:scaleX(0.9732);">Sort Decending</span>
<span class="t" style="top:303.80px;line-height:16px;font-size:12px;left:610.90px;transform-origin:0 50%;transform:scaleX(0.9441);">Clear Sort</span>
<span class="t" style="top:216.70px;line-height:16px;font-size:12px;left:718.80px;transform-origin:0 50%;transform:scaleX(0.9704);">Ctrl+F2</span>
<svg style="left:189px;top:42px;" width="21" height="21" viewBox="189 42 21 21"><path d="M194.39999999999998 50.6L199.2 55.800000000000004L204.0 50.6" fill="none" stroke="#5a5a5a" stroke-width="1.2"/></svg>
<svg style="left:211px;top:42px;" width="21" height="21" viewBox="211 42 21 21"><path fill="#555" fill-rule="evenodd" d="M219.10 45.10L221.18 45.10L221.18 46.73L222.12 46.73L222.12 45.10L224.20 45.10L224.20 47.95L226.81 47.95L226.81 51.01L228.06 51.01L228.06 53.36L229.10 53.36L229.10 60.70L223.16 60.70L223.16 54.48L220.14 54.48L220.14 60.70L214.20 60.70L214.20 53.36L215.24 53.36L215.24 51.01L216.49 51.01L216.49 47.95L219.10 47.95zM216.39 54.38V58.56H217.38V54.38zM225.92 54.38V58.56H226.91V54.38z"/><path d="M218.99 48.77V52.44M224.31 48.77V52.44" stroke="#e6e6e6" stroke-width="0.8"/></svg>
<svg style="left:234px;top:42px;" width="21" height="21" viewBox="234 42 21 21"><path fill="#666" d="M239.9 50.2a5.1 5.1 0 1 1 10.2 0c0 2.4 -2.4 3.6 -2.5 6.6h-5.2c-0.1 -3.0 -2.5 -4.2 -2.5 -6.6z"/><rect x="242.7" y="57.7" width="4.6" height="1.1" fill="#8a8a8a"/><rect x="243.3" y="59.3" width="3.4" height="1.2" fill="#a0a0a0"/></svg>
<svg style="left:257px;top:42px;" width="21" height="21" viewBox="257 42 21 21"><path d="M267.4 58.2V47.9a2.65 2.65 0 0 0-5.3 0V57a2.4 2.4 0 0 0 4 1.8" fill="none" stroke="#3f88d6" stroke-width="1.1"/><path d="M264 56.5V48.3a0.9 0.9 0 0 1 1.8 0V55" fill="none" stroke="#7fb2e8" stroke-width="0.9"/><path d="M267.6 49.4h1.6v1.6" fill="none" stroke="#7fb2e8" stroke-width="0.9"/><circle cx="270.9" cy="56.2" r="4.45" fill="#1b61b8"/><rect x="270.15" y="55.2" width="1.5" height="3.6" fill="#fff"/><circle cx="270.9" cy="53.800000000000004" r="0.8" fill="#fff"/></svg>
<svg style="left:280px;top:42px;" width="21" height="21" viewBox="280 42 21 21"><path d="M281.8 45h9.1v14h-9.1z" fill="#f9b44e"/><path d="M292 45.3l5 4.1h-5z" fill="#f9b44e"/><path d="M292 50.4h5v8.6h-5z" fill="#f9b44e"/><path d="M284.1 48.3h4.8M284.1 50.4h4.8M284.1 54.4h4.8M284.1 56.4h4.8" stroke="#6b6258" stroke-width="1"/><path d="M284.1 52.4h5.4" stroke="#3f3f4f" stroke-width="1.1"/><circle cx="293.4" cy="56.2" r="4.5" fill="#1b61b8"/><rect x="292.65" y="55.2" width="1.5" height="3.6" fill="#fff"/><circle cx="293.4" cy="53.800000000000004" r="0.8" fill="#fff"/></svg>
<svg style="left:303px;top:42px;" width="21" height="21" viewBox="303 42 21 21"><g opacity="1"><path d="M306.81 54.83C308.23 50.73 312.09 49.00 315.95 53.10" fill="none" stroke="#2a9d66" stroke-width="2.48" stroke-linecap="round"/><path d="M319.30 49.00L319.30 55.80L312.90 55.58z" fill="#2a9d66"/></g></svg>
<svg style="left:326px;top:42px;" width="21" height="21" viewBox="326 42 21 21"><path d="M328.80 46.10L344.60 46.10L338.60 53.10L338.60 60.60L334.80 60.60L334.80 53.10z" fill="#595959"/><path d="M342.00 47.00L343.00 47.00L338.00 53.00L338.00 59.90L336.80 59.90L336.80 52.70z" fill="#e8e8e8" opacity=".9"/></svg>
<svg style="left:207px;top:66px;" width="21" height="21" viewBox="207 66 21 21"><path d="M212.5 74.4L217.3 79.6L222.10000000000002 74.4" fill="none" stroke="#5a5a5a" stroke-width="1.2"/></svg>
<svg style="left:433px;top:66px;" width="21" height="21" viewBox="433 66 21 21"><path d="M438.4 74.4L443.2 79.6L448.0 74.4" fill="none" stroke="#bdbdbd" stroke-width="1.2"/></svg>
<svg style="left:615px;top:66px;" width="21" height="21" viewBox="615 66 21 21"><path d="M620.5 74.4L625.3 79.6L630.0999999999999 74.4" fill="none" stroke="#bdbdbd" stroke-width="1.2"/></svg>
<svg style="left:235px;top:91px;" width="19" height="19" viewBox="235 91 19 19"><rect x="236.5" y="92.8" width="15" height="15" fill="#fff" stroke="#7d7d7d" stroke-width="1.2"/><path d="M238.2 96.6l1.4 1.5l2.6-3M238.2 102.4l1.4 1.5l2.6-3" fill="none" stroke="#2d80d2" stroke-width="1.3"/><path d="M244 97.7h5.5M244 103.7h5.5" stroke="#9a9a9a" stroke-width="0.9"/></svg>
<svg style="left:235px;top:115px;" width="19" height="19" viewBox="235 115 19 19"><rect x="236.5" y="116.6" width="15" height="15" fill="#fff" stroke="#7d7d7d" stroke-width="1.2"/><rect x="238.3" y="118.7" width="3" height="3" fill="#fff" stroke="#2d72c8" stroke-width="1"/><rect x="238.3" y="124.6" width="3" height="3" fill="#fff" stroke="#2d72c8" stroke-width="1"/><path d="M244 121.3h5.5M244 127.3h5.5" stroke="#9a9a9a" stroke-width="0.9"/></svg>
<svg style="left:433px;top:89px;" width="21" height="21" viewBox="433 89 21 21"><rect x="435.8" y="96.5" width="14.8" height="10.4" fill="#fff" stroke="#6a6a6a" stroke-width="1"/><rect x="435.3" y="93.5" width="15.8" height="4.1" fill="#1f6fd0"/><rect x="438.2" y="92" width="1" height="3.6" fill="#e8eef6"/><rect x="447.40000000000003" y="92" width="1" height="3.6" fill="#e8eef6"/><rect x="438.2" y="92" width="1" height="1.4" fill="#7d8aa0"/><rect x="447.40000000000003" y="92" width="1" height="1.4" fill="#7d8aa0"/><rect x="440.40000000000003" y="98.4" width="5.3" height="4.2" fill="#a9dff4"/><path d="M437.7 100.4h11M437.7 102.9h11M437.7 105.2h11M440.40000000000003 98.4v6.8M443.1 98.4v6.8M445.7 98.4v6.8M437.7 100.4v4.8M448.5 100.4v4.8" stroke="#8f8f8f" stroke-width="0.7" fill="none"/></svg>
<svg style="left:615px;top:89px;" width="21" height="21" viewBox="615 89 21 21"><rect x="618.0" y="96.5" width="14.8" height="10.4" fill="#fff" stroke="#6a6a6a" stroke-width="1"/><rect x="617.5" y="93.5" width="15.8" height="4.1" fill="#1f6fd0"/><rect x="620.4" y="92" width="1" height="3.6" fill="#e8eef6"/><rect x="629.6" y="92" width="1" height="3.6" fill="#e8eef6"/><rect x="620.4" y="92" width="1" height="1.4" fill="#7d8aa0"/><rect x="629.6" y="92" width="1" height="1.4" fill="#7d8aa0"/><rect x="622.6" y="98.4" width="5.3" height="4.2" fill="#a9dff4"/><path d="M619.9 100.4h11M619.9 102.9h11M619.9 105.2h11M622.6 98.4v6.8M625.3 98.4v6.8M627.9 98.4v6.8M619.9 100.4v4.8M630.7 100.4v4.8" stroke="#8f8f8f" stroke-width="0.7" fill="none"/></svg>
<svg style="left:202px;top:534px;" width="21" height="21" viewBox="202 534 21 21"><path d="M205.7 536.8h8.2l3.6 3.8v10.5h-11.8z" fill="#fff" stroke="#666" stroke-width="1.2" stroke-linejoin="round"/><path d="M213.9 536.8v3.8h3.6" fill="#ddd" stroke="#666" stroke-width="1"/><path d="M210.4 541.6l-0.7 6.6M213.4 541.6l-0.7 6.6M208.2 543.6h6.8M207.9 546.2h6.8" stroke="#2a6fd0" stroke-width="1.05"/></svg>
<svg width="0" height="0" style="left:0;top:0"><defs><linearGradient id="gb" x1="0" y1="0" x2="0" y2="1"><stop offset="0" stop-color="#3f86e8"/><stop offset="1" stop-color="#1d4dbd"/></linearGradient><linearGradient id="gg" x1="0" y1="0" x2="0" y2="1"><stop offset="0" stop-color="#c9c9c9"/><stop offset="1" stop-color="#ababab"/></linearGradient></defs></svg>
<svg style="left:886px;top:186px;" width="18" height="18" viewBox="886 186 18 18"><rect x="888.5" y="188.5" width="12.2" height="3.1" fill="#bdbdbd"/><path d="M894.6 191.8l6.1 9.8h-12.2z" fill="url(#gg)"/></svg>
<svg style="left:886px;top:244px;" width="18" height="20" viewBox="886 244 18 20"><path d="M894.6 246.4l5.2 7.6h-10.4z" fill="url(#gg)"/><path d="M894.6 253.2l6 9h-12z" fill="url(#gg)"/></svg>
<svg style="left:886px;top:306px;" width="18" height="15" viewBox="886 306 18 15"><path d="M894.9 308.4l6.4 10.6h-12.8z" fill="url(#gg)"/></svg>
<svg style="left:886px;top:367px;" width="18" height="14" viewBox="886 367 18 14"><path d="M888.9 368.9h12.8l-6.4 10.2z" fill="url(#gb)" stroke="#2457c4" stroke-width="0.5"/></svg>
<svg style="left:886px;top:424px;" width="18" height="20" viewBox="886 424 18 20"><path d="M889.2 425.9h12l-6 9z" fill="url(#gb)" stroke="#2457c4" stroke-width="0.5"/><path d="M889.6 433.4h11.2l-5.6 8.5z" fill="url(#gb)" stroke="#2457c4" stroke-width="0.5"/></svg>
<svg style="left:886px;top:485px;" width="18" height="18" viewBox="886 485 18 18"><path d="M889 487.4h12.6l-6.3 9.5z" fill="url(#gb)" stroke="#2457c4" stroke-width="0.5"/><rect x="889" y="496.8" width="12.6" height="3.8" fill="#1f50c0"/></svg>
<svg style="left:585px;top:174px;" width="16" height="14" viewBox="585 174 16 14"><path d="M587.90 176.90L597.30 176.90L593.73 181.15L593.73 185.70L591.47 185.70L591.47 181.15z" fill="#6c6c6c"/><path d="M593.4 180.5v4.4" stroke="#c9c9c9" stroke-width="0.9"/></svg>
<svg style="left:584px;top:219px;" width="16" height="11" viewBox="584 219 16 11"><g opacity="0.9"><path d="M586.01 226.73C587.42 222.63 591.25 220.90 595.07 225.00" fill="none" stroke="#46b07e" stroke-width="2.48" stroke-linecap="round"/><path d="M598.40 220.90L598.40 227.70L592.05 227.48z" fill="#46b07e"/></g></svg>
<svg style="left:585px;top:263px;" width="15" height="10" viewBox="585 263 15 10"><path d="M586.8 271.2L592 265.40000000000003L597.2 271.2" fill="none" stroke="#9c9c9c" stroke-width="1.1"/></svg>
<svg style="left:585px;top:285px;" width="15" height="10" viewBox="585 285 15 10"><path d="M586.8 287.1L592 292.9L597.2 287.1" fill="none" stroke="#9c9c9c" stroke-width="1.1"/></svg>
<svg style="left:748px;top:174px;" width="15" height="22" viewBox="748 174 15 22"><path d="M749.7 176.3v15l3.6-3.4l2.6 6l2.1-0.9l-2.6-5.9h4.9z" fill="#fff" stroke="#1e2430" stroke-width="1" stroke-linejoin="miter"/></svg>
<svg style="left:5px;top:168.4px;" width="21" height="20" viewBox="5 168.4 21 20"><path d="M10.7 174.4l3.7 3.5l-3.7 3.5M15.3 174.4l3.7 3.5l-3.7 3.5" fill="none" stroke="#1c1c1c" stroke-width="1.8"/></svg>
<svg style="left:5px;top:192.15px;" width="21" height="21" viewBox="5 192.15 21 21"><path d="M9.4 194.95000000000002h8.1l3.6 3.6v9.8h-11.7z" fill="#fff" stroke="#4a4a4a" stroke-width="1"/><path d="M17.5 194.95000000000002v3.6h3.6" fill="#e8e8e8" stroke="#4a4a4a" stroke-width="0.9"/><path d="M10.9 197.55h4.6M10.9 199.45000000000002h5.6M10.9 201.35h5.6M10.9 203.25h3.4M10.9 205.15h3.4" stroke="#2b6fc9" stroke-width="1"/><path d="M19.2 200.55v9.6M14.3 205.35h9.8" stroke="#fff" stroke-width="4.6"/><path d="M19.2 201.05v8.7M14.7 205.35h9" stroke="#1f9950" stroke-width="3.1"/></svg>
<svg style="left:5px;top:215.9px;" width="21" height="20" viewBox="5 215.9 21 20"><g opacity="1"><path d="M9.30 227.50C10.70 223.70 14.50 222.10 18.30 225.90" fill="none" stroke="#2a9d66" stroke-width="2.30" stroke-linecap="round"/><path d="M21.60 222.10L21.60 228.40L15.30 228.20z" fill="#2a9d66"/></g></svg>
<svg style="left:5px;top:239.65px;" width="21" height="21" viewBox="5 239.65 21 21"><path d="M8.5 241.15h11.2v4.2l-2 2.7h-7.2l-2-2.7z" fill="#f8ad42"/><path d="M8.5 243.15h11.2M8.8 245.15h10.6" stroke="#fcd08f" stroke-width="0.7"/><rect x="12.4" y="248.05" width="3.4" height="7.9" fill="#f8ad42"/><path d="M12.4 249.85h3.4M12.4 251.85h3.4M12.4 253.85h3.4" stroke="#fff" stroke-width="0.7" opacity=".75"/><path d="M20.5 249.35v4.2" stroke="#1d5fbd" stroke-width="1.9"/><path d="M17.1 252.55h6.9l-3.45 4.7z" fill="#1d5fbd"/></svg>
<svg style="left:5px;top:263.4px;" width="21" height="21" viewBox="5 263.4 21 21"><rect x="12.2" y="265.2" width="7.2" height="4" fill="#fff" stroke="#555" stroke-width="1"/><path d="M7.7 270.79999999999995q0-1.8 1.8-1.8h12.4q1.8 0 1.8 1.8v6.8h-16z" fill="#595959"/><rect x="10.6" y="267.7" width="10.2" height="5.1" rx="1.2" fill="#1d5fbd"/><rect x="11.7" y="276.79999999999995" width="8" height="3.8" fill="#fff" stroke="#555" stroke-width="1"/><path d="M13.2 278.7h5" stroke="#999" stroke-width="0.8"/><rect x="9.2" y="273.5" width="1.3" height="1.1" fill="#ddd"/></svg>
<svg style="left:5px;top:287.15px;" width="21" height="21" viewBox="5 287.15 21 21"><path d="M7.70 289.05L21.60 289.05L16.32 296.00L16.32 303.45L12.98 303.45L12.98 296.00z" fill="#595959"/><path d="M19.31 289.94L20.19 289.94L15.79 295.90L15.79 302.75L14.74 302.75L14.74 295.60z" fill="#e8e8e8" opacity=".9"/><circle cx="19.2" cy="300.04999999999995" r="4.3" fill="#1b61b8"/><rect x="18.45" y="299.04999999999995" width="1.5" height="3.6" fill="#fff"/><circle cx="19.2" cy="297.65" r="0.8" fill="#fff"/></svg>
<svg style="left:5px;top:310.9px;" width="21" height="21" viewBox="5 310.9 21 21"><path d="M7.4 312.9L24.1 328.4H7.4z" fill="#f8b04a"/><path d="M10 319.9L15.6 325.29999999999995H10z" fill="#fcdba6"/><path d="M8.6 326.7h11" stroke="#4a3a20" stroke-width="1.1" stroke-dasharray="1 0.9" opacity=".8"/><path d="M21.3 312.4l2.3 2.2l-10.2 10.4l-3.1 1.2l0.9-3.3z" fill="#444"/><path d="M10.3 326.2l0.9-3.3l0.9 0.2l1.1 1.1l0.2 0.9z" fill="#f3f3f3" stroke="#444" stroke-width="0.5"/></svg>
<svg style="left:5px;top:334.65px;" width="21" height="21" viewBox="5 334.65 21 21"><path d="M9.6 336.84999999999997h7.6l3.6 3.6v11.2h-11.2z" fill="#fff" stroke="#4a4a4a" stroke-width="1.1"/><path d="M17.2 336.84999999999997v3.6h3.6" fill="#e8e8e8" stroke="#4a4a4a" stroke-width="0.9"/><path d="M11.7 345.45a3.4 3.4 0 0 1 6-1.8M18.5 347.04999999999995a3.4 3.4 0 0 1-6 1.8" fill="none" stroke="#35aa6e" stroke-width="1.3"/><path d="M18.6 341.84999999999997v2.9h-2.9zM11.6 350.65v-2.9h2.9z" fill="#2a9f62"/></svg>
<svg style="left:5px;top:358.4px;" width="21" height="21" viewBox="5 358.4 21 21"><path d="M19.6 363.4l-0.6-2.6h-10.8v0.8l5.6 6.2l-6 6.6v0.8h10.6" fill="none" stroke="#454545" stroke-width="1.3" stroke-linejoin="miter"/><path d="M8.6 361.2l5.9 6.5" stroke="#454545" stroke-width="2.2"/><path fill="#555" d="M17.489 369.311a3.1109999999999998 3.1109999999999998 0 1 1 6.2219999999999995 0c0 1.464 -1.464 2.196 -1.525 4.026h-3.172c-0.061 -1.83 -1.525 -2.562 -1.525 -4.026z"/><rect x="19.197000000000003" y="373.88599999999997" width="2.8059999999999996" height="0.671" fill="#8a8a8a"/><rect x="19.563000000000002" y="374.86199999999997" width="2.074" height="0.732" fill="#a0a0a0"/></svg>
<svg style="left:5px;top:382.15px;" width="21" height="21" viewBox="5 382.15 21 21"><path d="M7.7 398.54999999999995L20 387.15l3.3 1.2L13 398.54999999999995z" fill="#4e4e4e"/><path d="M18 389.04999999999995L20.4 386.84999999999997l2.9 1.6l-2.8 2.8z" fill="#fafafa" stroke="#4e4e4e" stroke-width="0.9" stroke-linejoin="round"/><circle cx="9.9" cy="387.95" r="1.7" fill="#f9ad45"/><circle cx="15.9" cy="386.15" r="1.9" fill="#f9ad45"/></svg>
<svg style="left:5px;top:405.9px;" width="21" height="21" viewBox="5 405.9 21 21"><path fill="#555" fill-rule="evenodd" d="M12.40 407.30L14.40 407.30L14.40 408.90L15.30 408.90L15.30 407.30L17.30 407.30L17.30 410.10L19.80 410.10L19.80 413.10L21.00 413.10L21.00 415.40L22.00 415.40L22.00 422.60L16.30 422.60L16.30 416.50L13.40 416.50L13.40 422.60L7.70 422.60L7.70 415.40L8.70 415.40L8.70 413.10L9.90 413.10L9.90 410.10L12.40 410.10zM9.80 416.40V420.50H10.75V416.40zM18.95 416.40V420.50H19.90V416.40z"/><path d="M12.30 410.90V414.50M17.40 410.90V414.50" stroke="#e6e6e6" stroke-width="0.8"/></svg>
<svg style="left:5px;top:429.65px;" width="21" height="21" viewBox="5 429.65 21 21"><rect x="8.4" y="432.04999999999995" width="13" height="13.4" fill="#fff" stroke="#555" stroke-width="1"/><rect x="7.9" y="431.54999999999995" width="14" height="2.5" fill="#1d5fbd"/><path d="M10.4 436.65h2.2M10.4 438.45h2.2M10.4 440.25h2.2M10.4 442.15h2.2" stroke="#444" stroke-width="1"/><path d="M13.6 436.65h5.6M13.6 438.45h3.4M13.6 440.25h2.6M13.6 442.15h2" stroke="#aaa" stroke-width="0.9"/><path d="M18.7 443.45l-3.4 2.9" stroke="#fff" stroke-width="3.2" stroke-linecap="round"/><circle cx="20.8" cy="441.34999999999997" r="2.7" fill="#fff" stroke="#2d7bd6" stroke-width="1.4"/><path d="M18.7 443.25l-3.3 2.9" stroke="#2d7bd6" stroke-width="1.7" stroke-linecap="round"/></svg>
<svg style="left:5px;top:453.4px;" width="21" height="21" viewBox="5 453.4 21 21"><path d="M8.7 461.0L14.3 455.4l3.4 3v2.6z" fill="#f9b95c"/><path d="M16.3 460.0h1.6v3" stroke="#444" stroke-width="1" fill="none"/><rect x="-3.3" y="-2" width="6.6" height="4" rx="1" fill="#7b2fa0" transform="translate(20.7 460.59999999999997) rotate(-35)"/><rect x="-3.5" y="-2" width="7" height="4" rx="1" fill="#1d5fbd" transform="translate(20.7 466.59999999999997) rotate(-35)"/><path d="M11.25 462.29999999999995v8.7M7.4 466.59999999999997h7.7" stroke="#1f9a55" stroke-width="3"/></svg>
<svg style="left:5px;top:477.15px;" width="21" height="21" viewBox="5 477.15 21 21"><rect x="8.4" y="482.15" width="13.2" height="7.6" fill="none" stroke="#d2d2d2" stroke-width="1"/><path d="M14.8 483.34999999999997v5.2M13.6 484.54999999999995h2.4M13.6 487.15h2.4" stroke="#d2d2d2" stroke-width="0.9"/><circle cx="19.9" cy="490.15" r="2.8" fill="#ececec" stroke="#cdcdcd" stroke-width="1.1"/><path d="M17.9 492.15l-2.8 2.4" stroke="#cdcdcd" stroke-width="1.3"/></svg>
</body></html>
